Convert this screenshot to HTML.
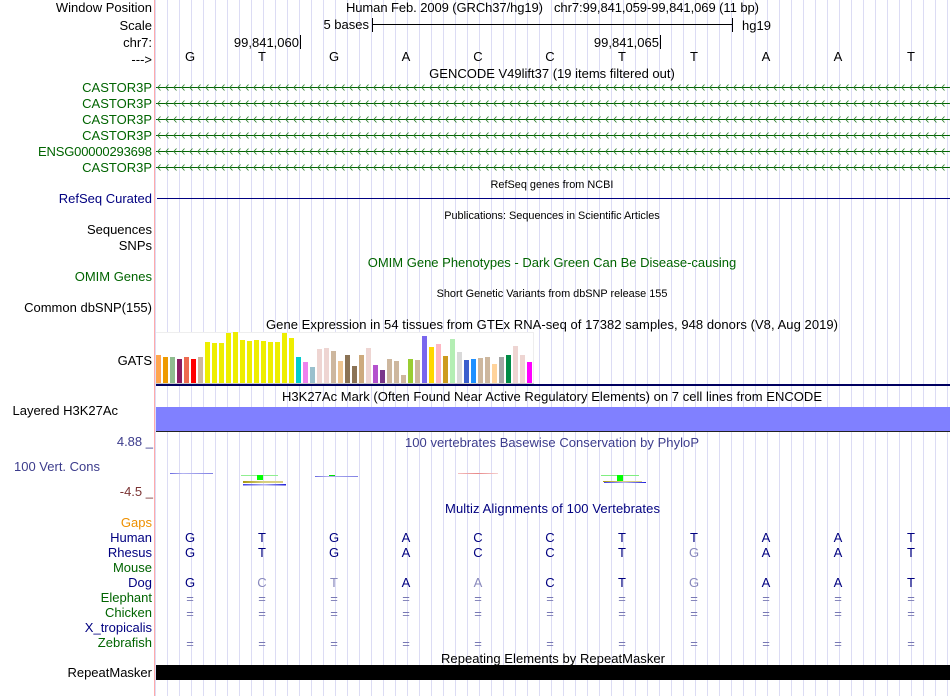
<!DOCTYPE html>
<html><head><meta charset="utf-8"><style>
html,body{margin:0;padding:0;background:#fff;width:950px;height:696px;overflow:hidden}
svg{display:block}
text{font-family:"Liberation Sans",sans-serif;font-size:13px;fill:#000}
.r{text-anchor:end}
.c{text-anchor:middle}
.g{fill:#006400}
.n{fill:#000080}
.s{font-size:10.9px}
.p{fill:#3c3c8c}
.e{fill:#8888bc}
.f{fill:#7878b4}
</style></head><body>
<svg width="950" height="696" viewBox="0 0 950 696" xmlns="http://www.w3.org/2000/svg">
<defs>
<pattern id="grid" x="167" y="0" width="12" height="696" patternUnits="userSpaceOnUse"><rect x="0" y="0" width="1" height="696" fill="#dcdcf4"/></pattern>
<pattern id="chev" x="157" y="84" width="8" height="16" patternUnits="userSpaceOnUse"><path d="M3.5 0.5L0.8 3.5L3.5 6.5" fill="none" stroke="#2f7f2f" stroke-width="0.9"/></pattern>
<linearGradient id="b1" x1="0" x2="1" y1="0" y2="0"><stop offset="0" stop-color="#6a6ae0"/><stop offset=".3" stop-color="#b4b4f0"/><stop offset="1" stop-color="#8080e4"/></linearGradient>
<linearGradient id="r1" x1="0" x2="1" y1="0" y2="0"><stop offset="0" stop-color="#f4c0c0"/><stop offset=".5" stop-color="#e88888"/><stop offset="1" stop-color="#f6d0d0"/></linearGradient>
<linearGradient id="ol" x1="0" x2="1" y1="0" y2="0"><stop offset="0" stop-color="#a89810"/><stop offset=".5" stop-color="#d8d080"/><stop offset="1" stop-color="#d8d080"/></linearGradient>
<linearGradient id="bl" x1="0" x2="1" y1="0" y2="0"><stop offset="0" stop-color="#4040e8"/><stop offset=".5" stop-color="#b0b0f4"/><stop offset="1" stop-color="#2020d8"/></linearGradient>
</defs>
<rect x="155" y="0" width="795" height="696" fill="url(#grid)"/>
<rect x="154" y="0" width="1" height="696" fill="#ffaaaa"/>

<text class="r" x="152" y="12">Window Position</text>
<text class="r" x="152" y="30">Scale</text>
<text class="r" x="152" y="47">chr7:</text>
<text class="r" x="152" y="64">---&gt;</text>

<text x="346" y="12" textLength="197">Human Feb. 2009 (GRCh37/hg19)</text>
<text x="554" y="12" textLength="205">chr7:99,841,059-99,841,069 (11 bp)</text>
<text class="r" x="369" y="29">5 bases</text>
<rect x="372" y="24" width="361" height="1" fill="#000"/>
<rect x="372" y="18" width="1" height="14" fill="#000"/>
<rect x="732" y="18" width="1" height="14" fill="#000"/>
<text x="742" y="30">hg19</text>
<text class="r" x="299" y="47">99,841,060</text>
<rect x="300" y="35" width="1" height="14" fill="#000"/>
<text class="r" x="659" y="47">99,841,065</text>
<rect x="660" y="35" width="1" height="14" fill="#000"/>

<g>
<text class="c" x="190" y="61">G</text><text class="c" x="262" y="61">T</text><text class="c" x="334" y="61">G</text><text class="c" x="406" y="61">A</text><text class="c" x="478" y="61">C</text><text class="c" x="550" y="61">C</text><text class="c" x="622" y="61">T</text><text class="c" x="694" y="61">T</text><text class="c" x="766" y="61">A</text><text class="c" x="838" y="61">A</text><text class="c" x="911" y="61">T</text>
</g>

<text class="c" x="552" y="78">GENCODE V49lift37 (19 items filtered out)</text>
<text class="r g" x="152" y="92">CASTOR3P</text>
<text class="r g" x="152" y="108">CASTOR3P</text>
<text class="r g" x="152" y="124">CASTOR3P</text>
<text class="r g" x="152" y="140">CASTOR3P</text>
<text class="r g" x="152" y="156" textLength="114">ENSG00000293698</text>
<text class="r g" x="152" y="172">CASTOR3P</text>

<rect x="156" y="87" width="794" height="1" fill="#006400"/>
<rect x="156" y="103" width="794" height="1" fill="#006400"/>
<rect x="156" y="119" width="794" height="1" fill="#006400"/>
<rect x="156" y="135" width="794" height="1" fill="#006400"/>
<rect x="156" y="151" width="794" height="1" fill="#006400"/>
<rect x="156" y="167" width="794" height="1" fill="#006400"/>
<rect x="156" y="84" width="794" height="87" fill="url(#chev)"/>

<text class="c s" x="552" y="188">RefSeq genes from NCBI</text>
<text class="r n" x="152" y="203">RefSeq Curated</text>
<rect x="157" y="198" width="793" height="1" fill="#000080"/>
<text class="c s" x="552" y="219">Publications: Sequences in Scientific Articles</text>
<text class="r" x="152" y="234">Sequences</text>
<text class="r" x="152" y="250">SNPs</text>
<text class="c g" x="552" y="267">OMIM Gene Phenotypes - Dark Green Can Be Disease-causing</text>
<text class="r g" x="152" y="281">OMIM Genes</text>
<text class="c s" x="552" y="297">Short Genetic Variants from dbSNP release 155</text>
<text class="r" x="152" y="312">Common dbSNP(155)</text>
<text class="c" x="552" y="329" textLength="572">Gene Expression in 54 tissues from GTEx RNA-seq of 17382 samples, 948 donors (V8, Aug 2019)</text>
<text class="r" x="152" y="365">GATS</text>

<rect x="156" y="332" width="378" height="52" fill="#fff"/>
<path d="M156 332.5H533.5V384" fill="none" stroke="#eeeeee"/>
<rect x="156" y="383" width="378" height="1" fill="#c8c8c8"/>
<g>
<rect x="156" y="355" width="5" height="28" fill="#ffa54f"/><rect x="163" y="357" width="5" height="26" fill="#ee9a00"/><rect x="170" y="357" width="5" height="26" fill="#8fbc8f"/><rect x="177" y="359" width="5" height="24" fill="#8b1c62"/><rect x="184" y="357" width="5" height="26" fill="#ee6a50"/><rect x="191" y="359" width="5" height="24" fill="#ff0000"/><rect x="198" y="357" width="5" height="26" fill="#cdb79e"/>
<rect x="205" y="342" width="5" height="41" fill="#eeee00"/><rect x="212" y="343" width="5" height="40" fill="#eeee00"/><rect x="219" y="343" width="5" height="40" fill="#eeee00"/><rect x="226" y="333" width="5" height="50" fill="#eeee00"/><rect x="233" y="332" width="5" height="51" fill="#eeee00"/><rect x="240" y="340" width="5" height="43" fill="#eeee00"/><rect x="247" y="341" width="5" height="42" fill="#eeee00"/><rect x="254" y="340" width="5" height="43" fill="#eeee00"/><rect x="261" y="341" width="5" height="42" fill="#eeee00"/><rect x="268" y="342" width="5" height="41" fill="#eeee00"/><rect x="275" y="342" width="5" height="41" fill="#eeee00"/><rect x="282" y="333" width="5" height="50" fill="#eeee00"/><rect x="289" y="338" width="5" height="45" fill="#eeee00"/>
<rect x="296" y="357" width="5" height="26" fill="#00cdcd"/><rect x="303" y="362" width="5" height="21" fill="#ee82ee"/><rect x="310" y="367" width="5" height="16" fill="#9ac0cd"/><rect x="317" y="349" width="5" height="34" fill="#eed5d2"/><rect x="324" y="348" width="5" height="35" fill="#eed5d2"/><rect x="331" y="351" width="5" height="32" fill="#cdb79e"/><rect x="338" y="361" width="5" height="22" fill="#eec591"/><rect x="345" y="355" width="5" height="28" fill="#8b7355"/><rect x="352" y="366" width="5" height="17" fill="#8b7355"/><rect x="359" y="355" width="5" height="28" fill="#cdaa7d"/><rect x="366" y="348" width="5" height="35" fill="#eed5d2"/><rect x="373" y="365" width="5" height="18" fill="#b452cd"/><rect x="380" y="370" width="5" height="13" fill="#7a378b"/><rect x="387" y="359" width="5" height="24" fill="#cdb79e"/><rect x="394" y="361" width="5" height="22" fill="#cdb79e"/><rect x="401" y="375" width="5" height="8" fill="#cdb79e"/><rect x="408" y="359" width="5" height="24" fill="#9acd32"/><rect x="415" y="360" width="5" height="23" fill="#cdb79e"/><rect x="422" y="336" width="5" height="47" fill="#7a67ee"/><rect x="429" y="347" width="5" height="36" fill="#ffd700"/><rect x="436" y="344" width="5" height="39" fill="#ffb6c1"/><rect x="443" y="356" width="5" height="27" fill="#cd9b1d"/><rect x="450" y="339" width="5" height="44" fill="#b4eeb4"/><rect x="457" y="352" width="5" height="31" fill="#d9d9d9"/><rect x="464" y="360" width="5" height="23" fill="#3a5fcd"/><rect x="471" y="359" width="5" height="24" fill="#1e90ff"/><rect x="478" y="358" width="5" height="25" fill="#cdb79e"/><rect x="485" y="357" width="5" height="26" fill="#cdb79e"/><rect x="492" y="364" width="5" height="19" fill="#ffd39b"/><rect x="499" y="357" width="5" height="26" fill="#a6a6a6"/><rect x="506" y="355" width="5" height="28" fill="#008b45"/><rect x="513" y="346" width="5" height="37" fill="#eed5d2"/><rect x="520" y="355" width="5" height="28" fill="#eed5d2"/><rect x="527" y="362" width="5" height="21" fill="#ff00ff"/>
</g>
<rect x="156" y="384" width="794" height="2" fill="#000060"/>

<text class="c" x="552" y="401" textLength="540">H3K27Ac Mark (Often Found Near Active Regulatory Elements) on 7 cell lines from ENCODE</text>
<text class="r" x="118" y="415">Layered H3K27Ac</text>
<rect x="156" y="407" width="794" height="24" fill="#8080ff"/>
<rect x="156" y="431" width="794" height="1" fill="#222"/>

<text class="r p" x="153" y="446">4.88 _</text>
<text class="c p" x="552" y="447" textLength="294">100 vertebrates Basewise Conservation by PhyloP</text>
<text class="p" x="14" y="471">100 Vert. Cons</text>
<text class="r" x="153" y="496" style="fill:#7a3333">-4.5 _</text>

<rect x="170" y="473" width="43" height="1" fill="url(#b1)"/>
<rect x="241" y="475" width="37" height="1" fill="#90ee90"/>
<rect x="257" y="475" width="6" height="5" fill="#00ff00"/>
<rect x="243" y="481" width="40" height="2" fill="url(#ol)"/>
<rect x="243" y="484" width="43" height="1.5" fill="url(#bl)"/>
<rect x="315" y="476" width="43" height="1" fill="url(#b1)"/>
<rect x="329" y="475" width="6" height="1" fill="#00e000"/>
<rect x="458" y="473" width="40" height="1" fill="url(#r1)"/>
<rect x="601" y="475" width="38" height="1" fill="#80ee80"/>
<rect x="617" y="475" width="6" height="6" fill="#00ff00"/>
<rect x="603" y="481" width="39" height="1" fill="url(#ol)"/>
<rect x="604" y="482" width="42" height="1" fill="url(#bl)"/>

<text class="c n" x="552.5" y="513" textLength="215">Multiz Alignments of 100 Vertebrates</text>
<text class="r" x="152" y="527" style="fill:#ee9000">Gaps</text>
<text class="r n" x="152" y="542">Human</text>
<text class="r n" x="152" y="557">Rhesus</text>
<text class="r g" x="152" y="572">Mouse</text>
<text class="r n" x="152" y="587">Dog</text>
<text class="r g" x="152" y="602">Elephant</text>
<text class="r g" x="152" y="617">Chicken</text>
<text class="r n" x="152" y="632">X_tropicalis</text>
<text class="r g" x="152" y="647">Zebrafish</text>

<g>
<text class="c n" x="190" y="542">G</text><text class="c n" x="262" y="542">T</text><text class="c n" x="334" y="542">G</text><text class="c n" x="406" y="542">A</text><text class="c n" x="478" y="542">C</text><text class="c n" x="550" y="542">C</text><text class="c n" x="622" y="542">T</text><text class="c n" x="694" y="542">T</text><text class="c n" x="766" y="542">A</text><text class="c n" x="838" y="542">A</text><text class="c n" x="911" y="542">T</text>
<text class="c n" x="190" y="557">G</text><text class="c n" x="262" y="557">T</text><text class="c n" x="334" y="557">G</text><text class="c n" x="406" y="557">A</text><text class="c n" x="478" y="557">C</text><text class="c n" x="550" y="557">C</text><text class="c n" x="622" y="557">T</text><text class="c e" x="694" y="557">G</text><text class="c n" x="766" y="557">A</text><text class="c n" x="838" y="557">A</text><text class="c n" x="911" y="557">T</text>
<text class="c n" x="190" y="587">G</text><text class="c e" x="262" y="587">C</text><text class="c e" x="334" y="587">T</text><text class="c n" x="406" y="587">A</text><text class="c e" x="478" y="587">A</text><text class="c n" x="550" y="587">C</text><text class="c n" x="622" y="587">T</text><text class="c e" x="694" y="587">G</text><text class="c n" x="766" y="587">A</text><text class="c n" x="838" y="587">A</text><text class="c n" x="911" y="587">T</text>
</g>
<g>
<text class="c f" x="190" y="603">=</text><text class="c f" x="262" y="603">=</text><text class="c f" x="334" y="603">=</text><text class="c f" x="406" y="603">=</text><text class="c f" x="478" y="603">=</text><text class="c f" x="550" y="603">=</text><text class="c f" x="622" y="603">=</text><text class="c f" x="694" y="603">=</text><text class="c f" x="766" y="603">=</text><text class="c f" x="838" y="603">=</text><text class="c f" x="911" y="603">=</text>
<text class="c f" x="190" y="618">=</text><text class="c f" x="262" y="618">=</text><text class="c f" x="334" y="618">=</text><text class="c f" x="406" y="618">=</text><text class="c f" x="478" y="618">=</text><text class="c f" x="550" y="618">=</text><text class="c f" x="622" y="618">=</text><text class="c f" x="694" y="618">=</text><text class="c f" x="766" y="618">=</text><text class="c f" x="838" y="618">=</text><text class="c f" x="911" y="618">=</text>
<text class="c f" x="190" y="648">=</text><text class="c f" x="262" y="648">=</text><text class="c f" x="334" y="648">=</text><text class="c f" x="406" y="648">=</text><text class="c f" x="478" y="648">=</text><text class="c f" x="550" y="648">=</text><text class="c f" x="622" y="648">=</text><text class="c f" x="694" y="648">=</text><text class="c f" x="766" y="648">=</text><text class="c f" x="838" y="648">=</text><text class="c f" x="911" y="648">=</text>
</g>

<text class="c" x="553" y="663" textLength="224">Repeating Elements by RepeatMasker</text>
<text class="r" x="152" y="677">RepeatMasker</text>
<rect x="156" y="665" width="794" height="15" fill="#000"/>
</svg>
</body></html>
